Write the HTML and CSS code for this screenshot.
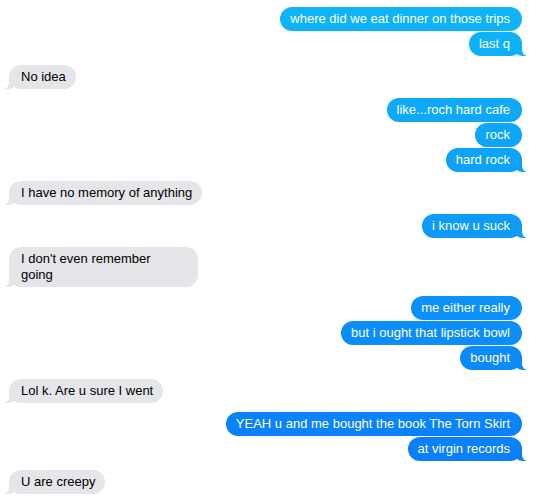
FILE: index.html
```html
<!DOCTYPE html>
<html>
<head>
<meta charset="utf-8">
<link rel="stylesheet" href="styles.css">
</head>
<body>
<div class="chat">
  <div class="group sent">
    <div class="msg">where did we eat dinner on those trips</div>
    <div class="msg tail">last q</div>
  </div>
  <div class="group received">
    <div class="msg tail">No idea</div>
  </div>
  <div class="group sent">
    <div class="msg">like...roch hard cafe</div>
    <div class="msg">rock</div>
    <div class="msg tail">hard rock</div>
  </div>
  <div class="group received">
    <div class="msg tail">I have no memory of anything</div>
  </div>
  <div class="group sent">
    <div class="msg tail">i know u suck</div>
  </div>
  <div class="group received">
    <div class="msg tail wide">I don't even remember<br>going</div>
  </div>
  <div class="group sent">
    <div class="msg">me either really</div>
    <div class="msg">but i ought that lipstick bowl</div>
    <div class="msg tail">bought</div>
  </div>
  <div class="group received">
    <div class="msg tail">Lol k. Are u sure I went</div>
  </div>
  <div class="group sent">
    <div class="msg">YEAH u and me bought the book The Torn Skirt</div>
    <div class="msg tail">at virgin records</div>
  </div>
  <div class="group received">
    <div class="msg tail">U are creepy</div>
  </div>
</div>
</body>
</html>
```
FILE: styles.css
```css
html, body {
  margin: 0;
  padding: 0;
  background: #fff;
}

.chat {
  display: flex;
  flex-direction: column;
  gap: 9px;
  padding: 7px 16px 0 9px;
  font-family: "Liberation Sans", Arial, sans-serif;
  font-size: 13px;
  line-height: 16px;
}

.group {
  display: flex;
  flex-direction: column;
  gap: 1px;
}

.sent {
  align-items: flex-end;
}

.received {
  align-items: flex-start;
}

.msg {
  position: relative;
  z-index: 0;
  border-radius: 12px;
  white-space: nowrap;
}

.sent .msg {
  padding: 4px 12px 4px 10px;
  color: #fff;
  background: linear-gradient(to bottom, #0fb6f8 0%, #0a7afa 100%) fixed;
}

.received .msg {
  padding: 4px 10px 4px 12px;
  color: #000;
  background: #e5e5ea;
}

.wide {
  width: 189px;
  box-sizing: border-box;
  white-space: normal;
}

.msg.tail::before,
.msg.tail::after {
  content: "";
  position: absolute;
  bottom: 0;
  height: 12px;
  z-index: -1;
}

.sent .tail::before {
  right: -4px;
  width: 12px;
  background: inherit;
  border-bottom-left-radius: 9px 8px;
}

.sent .tail::after {
  right: -10px;
  width: 10px;
  background: #fff;
  border-bottom-left-radius: 6px;
}

.received .tail::before {
  left: -4px;
  width: 12px;
  background: #e5e5ea;
  border-bottom-right-radius: 9px 8px;
}

.received .tail::after {
  left: -10px;
  width: 10px;
  background: #fff;
  border-bottom-right-radius: 6px;
}
```
